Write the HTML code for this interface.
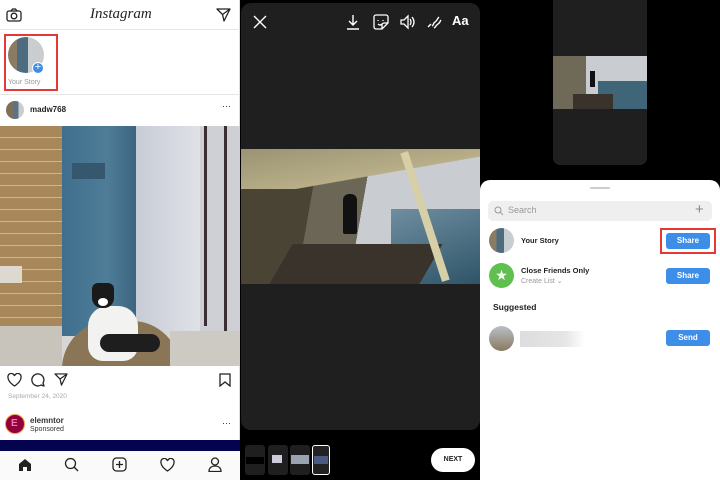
<!DOCTYPE html>
<html><head><meta charset="utf-8"><style>
*{margin:0;padding:0;box-sizing:border-box}
body{width:720px;height:480px;overflow:hidden;position:relative;font-family:"Liberation Sans",sans-serif;background:#000}
.a{position:absolute}
.btn{position:absolute;background:#3d8ee8;color:#fff;font-size:8px;font-weight:bold;text-align:center;border-radius:3px;width:44px;height:16px;line-height:16px}
</style></head><body>
<!-- LEFT -->
<div class="a" style="left:0;top:0;width:240px;height:480px;background:#fff;border-right:1px solid #ddd">
 <svg class="a" style="left:6px;top:8px" width="16" height="14" viewBox="0 0 16 14"><rect x="1" y="3" width="14" height="10" rx="2" fill="none" stroke="#222" stroke-width="1.3"/><path d="M5 3l1.5-2h3L11 3" fill="none" stroke="#222" stroke-width="1.3"/><circle cx="8" cy="8" r="2.8" fill="none" stroke="#222" stroke-width="1.3"/></svg>
 <div class="a" style="left:90px;top:6px;font-family:'Liberation Serif',serif;font-style:italic;font-size:15px;color:#222">Instagram</div>
 <svg class="a" style="left:216px;top:8px" width="15" height="14" viewBox="0 0 15 14"><path d="M1 1h13L8 13 6.5 6.5zM6.5 6.5L14 1" fill="none" stroke="#222" stroke-width="1.3" stroke-linejoin="round"/></svg>
 <div class="a" style="left:0;top:29px;width:240px;height:1px;background:#e5e5e5"></div>
 <div class="a" style="left:4px;top:34px;width:54px;height:57px;border:2px solid #e53935"></div>
 <div class="a" style="left:8px;top:37px;width:36px;height:36px;border-radius:50%;background:linear-gradient(90deg,#8a7b62 0 25%,#4e6c80 25% 55%,#c9cdd0 55%)"></div>
 <div class="a" style="left:32px;top:62px;width:12px;height:12px;border-radius:50%;background:#3d8ee8;border:1.5px solid #fff;color:#fff;font-size:11px;line-height:9px;text-align:center">+</div>
 <div class="a" style="left:8px;top:79px;font-size:7px;color:#999">Your Story</div>
 <div class="a" style="left:0;top:94px;width:240px;height:1px;background:#e5e5e5"></div>
 <div class="a" style="left:6px;top:101px;width:18px;height:18px;border-radius:50%;background:linear-gradient(90deg,#7d6f58 0 40%,#5a7486 40% 70%,#ccc 70%)"></div>
 <div class="a" style="left:30px;top:105px;font-size:8px;font-weight:bold;color:#222">madw768</div>
 <div class="a" style="left:222px;top:101px;font-size:9px;color:#222">···</div>
 <!-- photo -->
 <div class="a" style="left:0;top:126px;width:240px;height:240px;overflow:hidden;background:#d8d6d4">
  <div class="a" style="left:0;top:0;width:62px;height:200px;background:repeating-linear-gradient(180deg,#a8875a 0 11px,#c4b7a0 11px 12px)"></div>
  <div class="a" style="left:0;top:140px;width:22px;height:17px;background:#ddd8d0"></div>
  <div class="a" style="left:0;top:200px;width:62px;height:40px;background:#c9c4bb"></div>
  <div class="a" style="left:62px;top:0;width:74px;height:210px;background:linear-gradient(90deg,#3f6f8d,#4f7d98 60%,#3c6580)"></div>
  <div class="a" style="left:72px;top:37px;width:33px;height:16px;background:#35586e"></div>
  <div class="a" style="left:136px;top:0;width:64px;height:205px;background:linear-gradient(90deg,#c8ccd6,#dfe1e6)"></div>
  <div class="a" style="left:200px;top:0;width:40px;height:205px;background:#cfd0d6"></div>
  <div class="a" style="left:204px;top:0;width:3px;height:200px;background:#3a3033"></div>
  <div class="a" style="left:224px;top:0;width:3px;height:205px;background:#3a3033"></div>
  <div class="a" style="left:62px;top:195px;width:118px;height:48px;background:#8a7556;border-radius:60px 60px 0 0"></div>
  <div class="a" style="left:170px;top:205px;width:70px;height:35px;background:#cdc9c3"></div>
  <div class="a" style="left:88px;top:180px;width:50px;height:55px;background:#f2f2f0;border-radius:20px 20px 15px 15px"></div>
  <div class="a" style="left:92px;top:157px;width:22px;height:25px;background:#1a1a1a;border-radius:6px 6px 10px 10px"></div>
  <div class="a" style="left:98px;top:172px;width:10px;height:8px;background:#fff;border-radius:50%"></div>
  <div class="a" style="left:100px;top:208px;width:60px;height:18px;background:#1e1e1e;border-radius:10px"></div>
 </div>
 <svg class="a" style="left:7px;top:373px" width="15" height="14" viewBox="0 0 15 14"><path d="M7.5 13S1 9 1 4.5A3 3 0 0 1 7.5 3 3 3 0 0 1 14 4.5C14 9 7.5 13 7.5 13z" fill="none" stroke="#222" stroke-width="1.3"/></svg>
 <svg class="a" style="left:31px;top:373px" width="14" height="14" viewBox="0 0 14 14"><path d="M12 10A6 6 0 1 0 10 12L13 13z" fill="none" stroke="#222" stroke-width="1.3" stroke-linejoin="round"/></svg>
 <svg class="a" style="left:54px;top:373px" width="14" height="13" viewBox="0 0 15 14"><path d="M1 1h13L8 13 6.5 6.5zM6.5 6.5L14 1" fill="none" stroke="#222" stroke-width="1.3" stroke-linejoin="round"/></svg>
 <svg class="a" style="left:219px;top:373px" width="12" height="14" viewBox="0 0 12 14"><path d="M1 1h10v12l-5-4-5 4z" fill="none" stroke="#222" stroke-width="1.3"/></svg>
 <div class="a" style="left:8px;top:393px;font-size:6.5px;color:#aaa">September 24, 2020</div>
 <div class="a" style="left:5px;top:414px;width:20px;height:20px;border-radius:50%;background:#92003b;border:1.5px solid #f0a050"></div>
 <div class="a" style="left:11px;top:419px;font-size:10px;font-weight:bold;color:#f07ab4;line-height:10px">E</div>
 <div class="a" style="left:30px;top:416px;font-size:8px;font-weight:bold;color:#333">elemntor</div>
 <div class="a" style="left:30px;top:426px;font-size:7px;color:#333">Sponsored</div>
 <div class="a" style="left:222px;top:418px;font-size:9px;color:#222">···</div>
 <div class="a" style="left:0;top:440px;width:240px;height:11px;background:#04044e"></div>
 <div class="a" style="left:0;top:451px;width:240px;height:29px;background:#fafafa"></div>
 <svg class="a" style="left:18px;top:458px" width="14" height="14" viewBox="0 0 14 14"><path d="M1 6L7 1l6 5v7H9V9H5v4H1z" fill="#222"/></svg>
 <svg class="a" style="left:64px;top:457px" width="15" height="15" viewBox="0 0 15 15"><circle cx="6.5" cy="6.5" r="5" fill="none" stroke="#222" stroke-width="1.3"/><path d="M10 10l4 4" stroke="#222" stroke-width="1.3"/></svg>
 <svg class="a" style="left:112px;top:457px" width="15" height="15" viewBox="0 0 15 15"><rect x="1" y="1" width="13" height="13" rx="3.5" fill="none" stroke="#222" stroke-width="1.3"/><path d="M7.5 4v7M4 7.5h7" stroke="#222" stroke-width="1.3"/></svg>
 <svg class="a" style="left:160px;top:458px" width="15" height="14" viewBox="0 0 15 14"><path d="M7.5 13S1 9 1 4.5A3 3 0 0 1 7.5 3 3 3 0 0 1 14 4.5C14 9 7.5 13 7.5 13z" fill="none" stroke="#222" stroke-width="1.3"/></svg>
 <svg class="a" style="left:208px;top:457px" width="14" height="15" viewBox="0 0 14 15"><circle cx="7" cy="4.5" r="3.5" fill="none" stroke="#222" stroke-width="1.3"/><path d="M1 14.5c0-4 3-5.5 6-5.5s6 1.5 6 5.5z" fill="none" stroke="#222" stroke-width="1.3"/></svg>
</div>
<!-- MIDDLE -->
<div class="a" style="left:241px;top:3px;width:239px;height:427px;background:#1f1f1f;border-radius:10px"></div>
<svg class="a" style="left:253px;top:15px" width="14" height="14" viewBox="0 0 14 14"><path d="M1 1l12 12M13 1L1 13" stroke="#fff" stroke-width="1.4"/></svg>
<svg class="a" style="left:346px;top:14px" width="14" height="16" viewBox="0 0 14 16"><path d="M7 1v10M3 7l4 4 4-4M1 15h12" fill="none" stroke="#fff" stroke-width="1.4"/></svg>
<svg class="a" style="left:373px;top:14px" width="16" height="16" viewBox="0 0 16 16"><path d="M3 1h10a2 2 0 0 1 2 2v6l-6 6H3a2 2 0 0 1-2-2V3a2 2 0 0 1 2-2zM15 9h-4a2 2 0 0 0-2 2v4M5 6v1M10 6v1M5 10q2 2 4 0" fill="none" stroke="#fff" stroke-width="1.3"/></svg>
<svg class="a" style="left:400px;top:14px" width="16" height="16" viewBox="0 0 16 16"><path d="M1 6h3l4-4v12l-4-4H1zM10 5q2 3 0 6M12 3q4 5 0 10" fill="none" stroke="#fff" stroke-width="1.3"/></svg>
<svg class="a" style="left:426px;top:14px" width="16" height="16" viewBox="0 0 16 16"><path d="M2 13l3-3M6 12c2-1 1-3 3-4s2-3 4-5M8 14c2-1 2-3 4-4s2-3 3-4" fill="none" stroke="#fff" stroke-width="1.4"/></svg>
<div class="a" style="left:452px;top:13px;font-size:13px;font-weight:bold;color:#fff">Aa</div>
<div class="a" style="left:241px;top:149px;width:239px;height:135px;overflow:hidden;background:linear-gradient(100deg,#4a4434 0 30%,#6b6656 30% 50%,#c9ccd1 50%)">
 <div class="a" style="left:0;top:0;width:239px;height:40px;background:linear-gradient(170deg,#9a9374,#b8ae88 60%,transparent 61%)"></div>
 <div class="a" style="left:150px;top:60px;width:90px;height:75px;background:linear-gradient(160deg,#6f8ea0,#2e5468)"></div>
 <div class="a" style="left:40px;top:95px;width:150px;height:40px;background:#3a332b;transform:skewX(-30deg)"></div>
 <div class="a" style="left:102px;top:45px;width:14px;height:40px;background:#111;border-radius:6px 6px 2px 2px"></div>
 <div class="a" style="left:180px;top:0;width:8px;height:135px;background:#d7cfa8;transform:rotate(-18deg)"></div>
</div>
<div class="a" style="left:245px;top:445px;width:20px;height:30px;background:#1f1f1f;border-radius:3px"></div>
<div class="a" style="left:246px;top:457px;width:18px;height:7px;background:#000"></div>
<div class="a" style="left:268px;top:445px;width:20px;height:30px;background:#1f1f1f;border-radius:3px"></div>
<div class="a" style="left:272px;top:455px;width:10px;height:8px;background:#ccd"></div>
<div class="a" style="left:290px;top:445px;width:20px;height:30px;background:#1f1f1f;border-radius:3px"></div>
<div class="a" style="left:291px;top:455px;width:18px;height:9px;background:#9aa4b0"></div>
<div class="a" style="left:312px;top:445px;width:18px;height:30px;background:#222;border:1.5px solid #fff;border-radius:3px"></div>
<div class="a" style="left:314px;top:456px;width:14px;height:8px;background:#4a5a80"></div>
<div class="a" style="left:431px;top:448px;width:44px;height:24px;background:#fff;border-radius:12px;font-size:7px;font-weight:bold;text-align:center;line-height:24px;color:#222">NEXT</div>
<!-- RIGHT -->
<div class="a" style="left:553px;top:0;width:94px;height:165px;background:#1f1f1f;border-radius:0 0 7px 7px"></div>
<div class="a" style="left:553px;top:56px;width:94px;height:53px;overflow:hidden;background:linear-gradient(90deg,#6f6a58 0 35%,#c9ccd1 35%)">
 <div class="a" style="left:45px;top:25px;width:50px;height:28px;background:#3f6578"></div>
 <div class="a" style="left:20px;top:38px;width:40px;height:15px;background:#3a332b"></div>
 <div class="a" style="left:37px;top:15px;width:5px;height:16px;background:#111"></div>
</div>
<div class="a" style="left:480px;top:180px;width:240px;height:300px;background:#fff;border-radius:10px 10px 0 0"></div>
<div class="a" style="left:590px;top:187px;width:20px;height:2px;background:#ccc;border-radius:1px"></div>
<div class="a" style="left:488px;top:201px;width:224px;height:20px;background:#efefef;border-radius:5px"></div>
<svg class="a" style="left:494px;top:206px" width="10" height="10" viewBox="0 0 10 10"><circle cx="4" cy="4" r="3" fill="none" stroke="#999" stroke-width="1"/><path d="M6.3 6.3L9 9" stroke="#999" stroke-width="1"/></svg>
<div class="a" style="left:508px;top:205px;font-size:9px;color:#999">Search</div>
<div class="a" style="left:695px;top:201px;font-size:15px;color:#888;line-height:18px">+</div>
<div class="a" style="left:489px;top:228px;width:25px;height:25px;border-radius:50%;background:linear-gradient(90deg,#8a7b62 0 30%,#4e6c80 30% 60%,#c9cdd0 60%)"></div>
<div class="a" style="left:521px;top:236px;font-size:7.5px;font-weight:bold;color:#222">Your Story</div>
<div class="a" style="left:660px;top:228px;width:56px;height:26px;border:2px solid #e53935"></div>
<div class="btn" style="left:666px;top:233px">Share</div>
<div class="a" style="left:489px;top:263px;width:25px;height:25px;border-radius:50%;background:#5fbf4f;color:#fff;font-size:14px;text-align:center;line-height:25px">★</div>
<div class="a" style="left:521px;top:266px;font-size:7.5px;font-weight:bold;color:#222">Close Friends Only</div>
<div class="a" style="left:521px;top:277px;font-size:7px;color:#999">Create List ⌄</div>
<div class="btn" style="left:666px;top:268px">Share</div>
<div class="a" style="left:493px;top:302px;font-size:8.5px;font-weight:bold;color:#222">Suggested</div>
<div class="a" style="left:489px;top:326px;width:25px;height:25px;border-radius:50%;background:linear-gradient(180deg,#b8bfc6,#8a7a62)"></div>
<div class="a" style="left:520px;top:331px;width:65px;height:16px;background:linear-gradient(90deg,#ddd,#e6e6e6 70%,#fff)"></div>
<div class="btn" style="left:666px;top:330px">Send</div>
</body></html>
